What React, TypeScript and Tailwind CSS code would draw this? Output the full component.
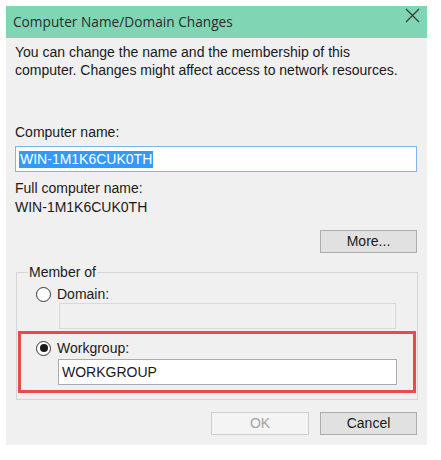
function Radio({ checked }: { checked?: boolean }) {
    return (
        <span className="w-[15px] h-[15px] rounded-full border border-[#333] bg-white flex items-center justify-center shrink-0">
            {checked && <span className="w-[8px] h-[8px] rounded-full bg-[#1a1a1a]" />}
        </span>
    );
}

export default function App() {
    return (
        <div className="w-[441px] h-[460px] bg-white pt-[6px] pl-[6px] text-[14px] text-[#1a1a1a]" style={{ fontFamily: '"Liberation Sans", Arial, sans-serif' }}>
            <div className="w-[421px] h-[439px] bg-[#f0f0f0] flex flex-col">
                <div className="h-[32px] bg-[#80d6b4] flex justify-between pl-[7px] pr-[7px]">
                    <span className="self-center text-[13.7px] text-[#2b2b2b]" style={{ fontFamily: '"Open Sans", "Noto Sans", sans-serif' }}>Computer Name/Domain Changes</span>
                    <svg width="15" height="15" viewBox="0 0 15 15" className="mt-[2px]">
                        <path d="M1 1 L14 14 M14 1 L1 14" stroke="#3a3a3a" strokeWidth="1.3" fill="none" />
                    </svg>
                </div>

                <div className="flex flex-col pl-[9px] pr-[10px]">
                    <p className="mt-[5px] leading-[18px]">
                        You can change the name and the membership of this
                        <br />
                        computer. Changes might affect access to network resources.
                    </p>

                    <label className="mt-[44px] leading-[18px]">Computer name:</label>
                    <div className="mt-[5px] h-[26px] border border-[#7eb4ea] bg-white flex items-center px-[3px]">
                        <span className="bg-[#3399ff] text-white leading-[17px] px-[1px]">WIN-1M1K6CUK0TH</span>
                    </div>

                    <label className="mt-[7px] leading-[18px]">Full computer name:</label>
                    <p className="leading-[18px] mt-[1px]">WIN-1M1K6CUK0TH</p>

                    <div className="flex justify-end mt-[14px]">
                        <button className="w-[97px] h-[23px] border border-[#adadad] bg-[#e1e1e1]">More...</button>
                    </div>

                    <fieldset className="mt-[11px] border border-[#d5d5d5] px-px pb-[6px] ml-px mr-[-1px] min-w-0">
                        <legend className="ml-[10px] px-[1px] leading-[16px]">Member of</legend>
                        <div className="h-[18px] flex items-center gap-[6px] ml-[18px] mt-[5px]">
                            <Radio />
                            <span className="leading-[18px]">Domain:</span>
                        </div>
                        <div className="ml-[41px] mr-[20px] h-[26px] border border-[#d9d9d9] bg-[#f0f0f0]" />

                        <div className="mt-[2px] border-[3px] border-[#e84b4d] pt-[5px] pb-[5px]">
                            <div className="h-[18px] flex items-center gap-[6px] ml-[15px]">
                                <Radio checked />
                                <span className="leading-[18px]">Workgroup:</span>
                            </div>
                            <div className="mt-[2px] ml-[37px] mr-[16px] h-[26px] border border-[#ababab] bg-white flex items-center px-[3px]">
                                WORKGROUP
                            </div>
                        </div>
                    </fieldset>

                    <div className="flex justify-end gap-[11px] mt-[12px]">
                        <button className="w-[98px] h-[23px] border border-[#cfcfcf] bg-[#f4f4f4] text-[#a3a3a3]">OK</button>
                        <button className="w-[97px] h-[23px] border border-[#adadad] bg-[#e1e1e1]">Cancel</button>
                    </div>
                </div>
            </div>
        </div>
    );
}
